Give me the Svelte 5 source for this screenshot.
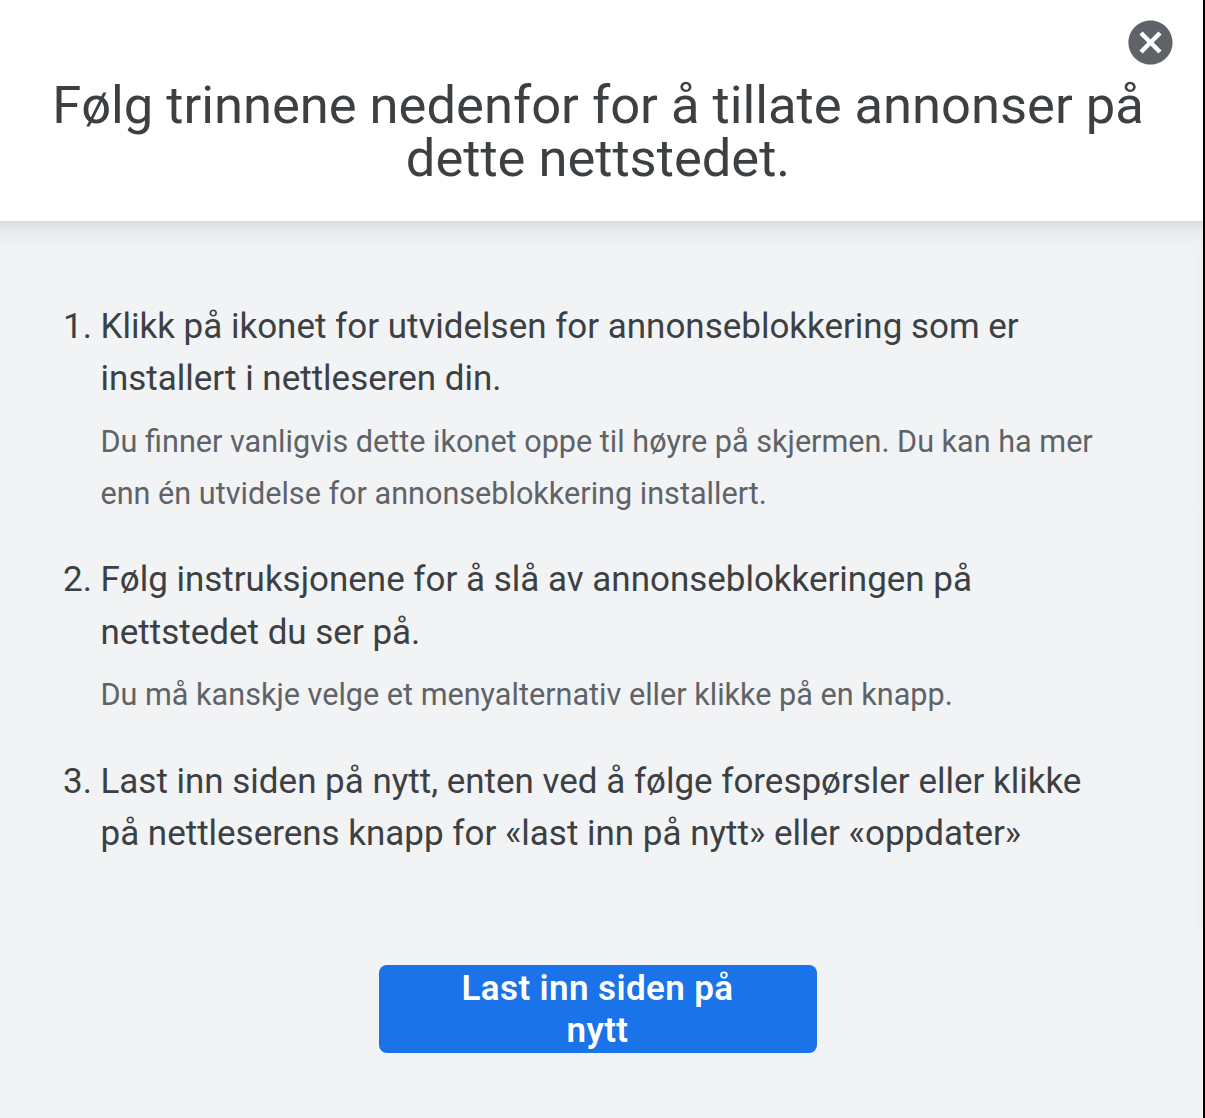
<script>
    const steps = [
        {
            title: 'Klikk på ikonet for utvidelsen for annonseblokkering som er installert i nettleseren din.',
            hint: 'Du finner vanligvis dette ikonet oppe til høyre på skjermen. Du kan ha mer enn én utvidelse for annonseblokkering installert.'
        },
        {
            title: 'Følg instruksjonene for å slå av annonseblokkeringen på nettstedet du ser på.',
            hint: 'Du må kanskje velge et menyalternativ eller klikke på en knapp.'
        },
        {
            title: 'Last inn siden på nytt, enten ved å følge forespørsler eller klikke på nettleserens knapp for «last inn på nytt» eller «oppdater»'
        }
    ];
</script>

<div class="dialog">
    <header>
        <button class="close" aria-label="Lukk">
            <svg width="53" height="53" viewBox="0 0 24 24">
                <path fill="#5f6368" d="M12 2C6.47 2 2 6.47 2 12s4.47 10 10 10 10-4.47 10-10S17.53 2 12 2zm5 13.59L15.59 17 12 13.41 8.41 17 7 15.59 10.59 12 7 8.41 8.41 7 12 10.59 15.59 7 17 8.41 13.41 12 17 15.59z" />
            </svg>
        </button>
        <h1>Følg trinnene nedenfor for å tillate annonser på dette nettstedet.</h1>
    </header>

    <main>
        <ol>
            {#each steps as step, i}
                <li>
                    <span class="number">{i + 1}.</span>
                    <div class="text">
                        <p class="title">{step.title}</p>
                        {#if step.hint}
                            <p class="hint">{step.hint}</p>
                        {/if}
                    </div>
                </li>
            {/each}
        </ol>
    </main>

    <footer>
        <button class="reload">Last inn siden på nytt</button>
    </footer>
</div>

<style>
    :global(body) {
        background: #f1f3f4;
    }

    .dialog {
        box-sizing: border-box;
        width: 1205px;
        height: 1118px;
        overflow: hidden;
        display: flex;
        flex-direction: column;
        border-right: 2px solid #000;
        background: #f1f3f5;
        font-family: Roboto, sans-serif;
        color: #3c4043;
    }

    header {
        position: relative;
        box-sizing: border-box;
        height: 221px;
        padding: 79px 40px 0 33px;
        background: #fff;
    }

    .close {
        position: absolute;
        top: 16px;
        right: 26px;
        width: 53px;
        height: 53px;
        padding: 0;
        border: 0;
        background: none;
    }

    .close svg {
        display: block;
    }

    h1 {
        margin: 0;
        font-size: 52.5px;
        line-height: 52.5px;
        font-weight: 400;
        text-align: center;
    }

    main {
        height: 708px;
        box-sizing: border-box;
        padding: 79.5px 90px 0 63px;
        background:
            linear-gradient(to bottom, #d9dbe0 0, #e2e4e7 6px, #ebedef 14px, rgba(241, 243, 245, 0) 27px),
            linear-gradient(to left, #edeff0 0, rgba(241, 243, 245, 0) 14px);
    }

    ol {
        margin: 0;
        padding: 0;
        list-style: none;
    }

    li {
        display: flex;
        margin-bottom: 33.9px;
    }

    .number {
        flex: 0 0 37.5px;
        font-size: 35px;
        line-height: 52.4px;
    }

    p {
        margin: 0;
    }

    .title {
        font-size: 34.98px;
        line-height: 52.4px;
    }

    .hint {
        margin-top: 10.2px;
        font-size: 30.6px;
        line-height: 52.4px;
        color: #5f6368;
    }

    footer {
        display: flex;
        justify-content: center;
        padding: 36px 8px 0 0;
    }

    .reload {
        width: 438px;
        height: 88px;
        padding: 2px 70px 0;
        border: 0;
        border-radius: 8px;
        background: #1a73e8;
        color: #fff;
        font-family: inherit;
        font-size: 35px;
        font-weight: 600;
        letter-spacing: 0.38px;
        line-height: 42px;
    }
</style>
